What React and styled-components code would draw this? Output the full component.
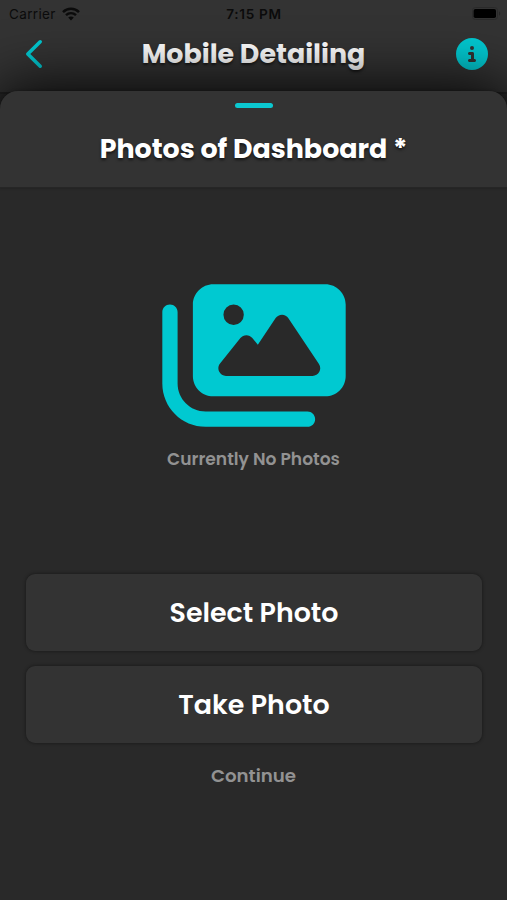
import React from 'react';
import styled, { createGlobalStyle } from 'styled-components';
import { FaImages, FaCircleInfo } from 'react-icons/fa6';

const GlobalStyle = createGlobalStyle`
  * {
    box-sizing: border-box;
  }
  body {
    margin: 0;
    background: #292929;
    font-family: Poppins, Inter, sans-serif;
  }
`;

const Screen = styled.div`
  display: flex;
  flex-direction: column;
  height: 900px;
  overflow: hidden;
  background: #292929;
`;

const TopBar = styled.header`
  flex: none;
  height: 94px;
  background: #333333;
  border-bottom: 2px solid #222222;
`;

const StatusBar = styled.div`
  display: grid;
  grid-template-columns: 1fr auto 1fr;
  align-items: center;
  height: 27px;
  padding: 0 6px 0 9px;
  font-family: Inter, sans-serif;
  font-size: 13.5px;
  color: #0b0b0b;
`;

const Carrier = styled.div`
  display: flex;
  align-items: center;
  gap: 6px;
  letter-spacing: 0.36px;
`;

const Time = styled.div`
  font-weight: 600;
  font-size: 13.6px;
  letter-spacing: 0.7px;
  margin-right: 2px;
`;

const BatteryIcon = styled.svg`
  justify-self: end;
`;

const NavBar = styled.div`
  display: grid;
  grid-template-columns: 50px 1fr 40px;
  align-items: center;
  height: 54px;
  padding: 0 19px 0 9px;
`;

const IconButton = styled.button`
  display: flex;
  justify-content: ${({ $align }) => $align};
  padding: 0;
  border: 0;
  background: none;
  color: #02c9d1;
`;

const Heading = styled.h1`
  margin: 0;
  font-size: 26.9px;
  line-height: 40px;
  font-weight: 700;
  text-align: center;
  white-space: nowrap;
  color: #ffffff;
  text-shadow: 0 2px 3px rgba(0, 0, 0, 0.6);
`;

const Sheet = styled.main`
  position: relative;
  flex: 1;
  display: flex;
  flex-direction: column;
  margin-top: -3px;
  border-radius: 18px 18px 0 0;
  background: #292929;
  box-shadow: 0 0 60px 4px rgba(0, 0, 0, 0.95);
`;

const SheetHeader = styled.div`
  display: flex;
  flex-direction: column;
  align-items: center;
  height: 97px;
  padding-top: 12px;
  border-radius: 18px 18px 0 0;
  border-bottom: 1px solid #262626;
  background: #333333;
  box-shadow: 0 0 3px rgba(0, 0, 0, 0.35);
`;

const Handle = styled.div`
  width: 38px;
  height: 5px;
  margin-bottom: 21px;
  border-radius: 2.5px;
  background: #0bc8d0;
`;

const EmptyState = styled.div`
  display: flex;
  flex-direction: column;
  align-items: center;
  height: 386px;
  padding-top: 86px;
  color: #00c9d1;
`;

const PhotosIcon = styled(FaImages)`
  width: 184px;
  height: 163px;
`;

const Caption = styled.p`
  margin: ${({ $top }) => $top} 0 0;
  font-size: ${({ $size }) => $size};
  line-height: 26px;
  font-weight: 600;
  text-align: center;
  color: #929292;
`;

const Actions = styled.div`
  display: flex;
  flex-direction: column;
  gap: 15px;
  padding: 0 25px 0 26px;
`;

const ActionButton = styled.button`
  height: 77px;
  padding: 1px 0 0;
  border: 0;
  border-radius: 9px;
  background: #333333;
  box-shadow: 0 0 3px 1px rgba(0, 0, 0, 0.28);
  font-family: inherit;
  font-size: 26.9px;
  font-weight: 600;
  color: #ffffff;
`;

const WifiIcon = () => (
  <svg width="18" height="14" viewBox="0 0 18 14" fill="none" stroke="currentColor">
    <path d="M1 5.1C5.4 0.7 12.6 0.7 17 5.1" strokeWidth="2.5" />
    <path d="M4 8.2C6.8 5.4 11.2 5.4 14 8.2" strokeWidth="2.4" />
    <path d="M9 13.4L6.2 10.5C7.8 9 10.2 9 11.8 10.5Z" fill="currentColor" stroke="none" />
  </svg>
);

const Battery = () => (
  <BatteryIcon width="29" height="14" viewBox="0 0 29 14">
    <rect x="0.5" y="0.5" width="25" height="12" rx="3" fill="none" stroke="#2a2a2a" />
    <rect x="1.6" y="2" width="22.4" height="9" rx="1.8" fill="#000000" />
    <path d="M27 4.3C28.6 5 28.6 8 27 8.7Z" fill="#262626" />
  </BatteryIcon>
);

const BackIcon = () => (
  <svg width="18" height="30" viewBox="0 0 18 30" fill="none">
    <path
      d="M15.2 2.8L2.8 15L15.2 27.2"
      stroke="currentColor"
      strokeWidth="3.6"
      strokeLinecap="round"
      strokeLinejoin="round"
    />
  </svg>
);

const App = () => {
  return (
    <Screen>
      <GlobalStyle />
      <TopBar>
        <StatusBar>
          <Carrier>
            Carrier
            <WifiIcon />
          </Carrier>
          <Time>7:15 PM</Time>
          <Battery />
        </StatusBar>
        <NavBar>
          <IconButton $align="center" aria-label="Back">
            <BackIcon />
          </IconButton>
          <Heading>Mobile Detailing</Heading>
          <IconButton $align="flex-end" aria-label="Info">
            <FaCircleInfo size={32} />
          </IconButton>
        </NavBar>
      </TopBar>
      <Sheet>
        <SheetHeader>
          <Handle />
          <Heading>Photos of Dashboard *</Heading>
        </SheetHeader>
        <EmptyState>
          <PhotosIcon />
          <Caption $top="9px" $size="17.1px">Currently No Photos</Caption>
        </EmptyState>
        <Actions>
          <ActionButton>Select Photo</ActionButton>
          <ActionButton>Take Photo</ActionButton>
        </Actions>
        <Caption $top="20px" $size="18.2px">Continue</Caption>
      </Sheet>
    </Screen>
  );
};

export default App;
